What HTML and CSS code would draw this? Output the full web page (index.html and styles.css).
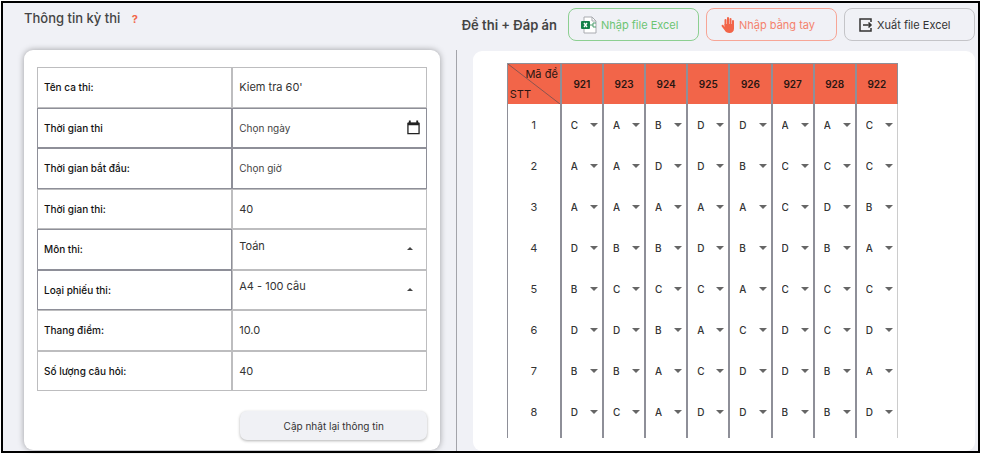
FILE: index.html
```html
<!DOCTYPE html>
<html lang="vi">
<head>
    <meta charset="utf-8">
    <title>Thông tin kỳ thi</title>
    <link rel="stylesheet" href="styles.css">
</head>
<body>
    <div class="frame">
        <header class="header">
            <h2 class="title">Thông tin kỳ thi <a class="help" href="#help">?</a></h2>
            <div class="actions">
                <h2>Đề thi + Đáp án</h2>
                <button class="action green" type="button">
                    <svg width="16" height="18" viewBox="0 0 16 18">
                        <path d="M3 1h8l4 4v12H3z" fill="#fff" stroke="#a9abb0"/>
                        <path d="M11 1v4h4" fill="none" stroke="#a9abb0"/>
                        <path d="M9 9h3M12 7v4h3M12 7h3" fill="none" stroke="#4b9c6d"/>
                        <rect x="0" y="5" width="9" height="8" rx="1" fill="#15804a"/>
                        <path d="M3 7l3 4M6 7l-3 4" stroke="#fff" stroke-width="1.3"/>
                    </svg>
                    <span>Nhập file Excel</span>
                </button>
                <button class="action red" type="button">
                    <svg width="14" height="18" viewBox="0 0 14 18">
                        <path d="M4.500 10V4M7 9V2M9.500 9V3M12 10V5" fill="none" stroke="#f26549" stroke-width="2" stroke-linecap="round"/>
                        <path d="M3.500 8H13v4.500c0 2.800-1.700 4.500-4.500 4.500-2.400 0-3.800-1-4.800-2.800L.8 10.500c-.8-1.300.7-2.200 1.600-1.300L4 11z" fill="#f26549"/>
                    </svg>
                    <span>Nhập bằng tay</span>
                </button>
                <button class="action grey" type="button">
                    <svg width="14" height="14" viewBox="0 0 14 14" fill="none" stroke="#333" stroke-width="1.500">
                        <path d="M12 4V1H1v12h11v-3M4 7h8M9.500 4.500L12 7 9.500 9.500"/>
                    </svg>
                    <span>Xuất file Excel</span>
                </button>
            </div>
        </header>

        <main class="panels">
            <form class="card info">
                <table class="info-table">
                    <tr>
                        <th><label for="name">Tên ca thi:</label></th>
                        <td><input id="name" type="text" value="Kiem tra 60'"></td>
                    </tr>
                    <tr class="dark">
                        <th><label for="date">Thời gian thi</label></th>
                        <td>
                            <div class="field">
                                <input id="date" class="small" type="text" placeholder="Chọn ngày">
                                <svg width="14" height="15" viewBox="0 0 14 15">
                                    <path d="M1 3h12v11H1z" fill="none" stroke="#222" stroke-width="1.400"/>
                                    <path d="M1 2h12v3H1zM2 0h2v3H2zM10 0h2v3h-2z" fill="#222"/>
                                </svg>
                            </div>
                        </td>
                    </tr>
                    <tr class="dark">
                        <th><label for="start">Thời gian bắt đầu:</label></th>
                        <td><input id="start" class="small" type="text" placeholder="Chọn giờ"></td>
                    </tr>
                    <tr>
                        <th><label for="duration">Thời gian thi:</label></th>
                        <td><input id="duration" type="text" value="40"></td>
                    </tr>
                    <tr class="dark-label">
                        <th><label for="subject">Môn thi:</label></th>
                        <td>
                            <div class="field raised">
                                <select id="subject"><option>Toán</option></select>
                                <i class="up"></i>
                            </div>
                        </td>
                    </tr>
                    <tr class="dark-label">
                        <th><label for="sheet">Loại phiếu thi:</label></th>
                        <td>
                            <div class="field raised">
                                <select id="sheet"><option>A4 - 100 câu</option></select>
                                <i class="up"></i>
                            </div>
                        </td>
                    </tr>
                    <tr>
                        <th><label for="scale">Thang điểm:</label></th>
                        <td><input id="scale" type="text" value="10.0"></td>
                    </tr>
                    <tr>
                        <th><label for="count">Số lượng câu hỏi:</label></th>
                        <td><input id="count" type="text" value="40"></td>
                    </tr>
                </table>
                <button class="update" type="button">Cập nhật lại thông tin</button>
            </form>

            <div class="divider"></div>

            <section class="card answers">
                <table class="answer-table">
                    <thead>
                        <tr id="codes">
                            <th class="corner">
                                <svg viewBox="0 0 52 40" preserveAspectRatio="none"><path d="M0 0L52 40" stroke="#8a5450"/></svg>
                                <div class="code">Mã đề</div>
                                <div class="stt">STT</div>
                            </th>
                        </tr>
                    </thead>
                    <tbody id="answers"></tbody>
                </table>
            </section>
        </main>
    </div>
    <script src="script.js"></script>
</body>
</html>
```
FILE: styles.css
```css
* {
    box-sizing: border-box;
}

body {
    margin: 0;
    padding: 1px;
    background-color: #ffffff;
    font-family: Inter, "Liberation Sans", sans-serif;
    font-size: 11px;
    color: #333333;
}

.frame {
    border: 2px solid #000000;
    background-color: #f0f1f6;
}

.header {
    display: flex;
    justify-content: space-between;
    height: 47px;
    padding: 5px 3px 0 21px;
}

h2 {
    margin: 0;
    font-size: 13px;
    line-height: 20px;
    font-weight: 500;
    color: #444444;
}

.help {
    margin-left: 8px;
    font-size: 11px;
    font-weight: 700;
    color: #f26549;
    text-decoration: none;
}

.actions {
    display: flex;
    align-items: center;
    gap: 7px;
    height: 33px;
}

.actions h2 {
    margin-right: 4px;
    font-weight: 600;
}

button, input, select {
    font-family: inherit;
    color: inherit;
}

.action {
    display: flex;
    align-items: center;
    gap: 4px;
    width: 131px;
    height: 33px;
    padding: 0 0 0 12px;
    border: 1px solid #c4c4c8;
    border-radius: 8px;
    background: none;
    font-size: 11px;
    white-space: nowrap;
    cursor: pointer;
}

.green {
    border-color: #8ccf91;
    color: #6cc473;
}

.red {
    padding-left: 14px;
    border-color: #f7a596;
    color: #f4826c;
}

.grey {
    padding-left: 14px;
}

.panels {
    display: grid;
    grid-template-columns: minmax(0, 416fr) 1px minmax(0, 501fr);
    column-gap: 16px;
    padding: 0 3px 0 21px;
}

.card {
    background-color: #ffffff;
    border-radius: 9px;
}

.info {
    margin-bottom: 1px;
    padding: 17px 13px 10px 13px;
    box-shadow: 0 0 6px rgba(0, 0, 0, 0.35);
}

.info-table {
    width: 100%;
    height: 324px;
    table-layout: fixed;
    border-spacing: 0;
}

.info-table th, .info-table td {
    height: 40px;
    padding: 0 6px;
    border: 1px solid #bdbdbf;
    text-align: left;
}

.info-table th {
    font-size: 10px;
    font-weight: 500;
    color: #111111;
}

.info-table .dark th, .info-table .dark td, .info-table .dark-label th {
    border-color: #8e8f98;
}

.info-table input, .info-table select {
    display: block;
    width: 100%;
    height: 20px;
    padding: 0;
    border: none;
    outline: none;
    background: none;
    appearance: none;
    font-size: 11px;
}

.info-table .small {
    font-size: 10px;
}

.info-table input::placeholder {
    color: #444444;
}

.field {
    display: flex;
    align-items: center;
}

.raised {
    padding-bottom: 7px;
}

.up {
    margin: 6px 7px 0 0;
    border: 3px solid transparent;
    border-top: none;
    border-bottom-color: #444444;
}

.update {
    display: block;
    width: 48%;
    height: 29px;
    margin: 20px 0 0 auto;
    border: none;
    border-radius: 7px;
    background-color: #f0f1f5;
    box-shadow: 0 1px 3px rgba(0, 0, 0, 0.3);
    font-size: 10px;
    cursor: pointer;
}

.divider {
    background-color: #a3a4aa;
}

.answers {
    margin-top: 1px;
    padding: 12px 0 13px;
}

.answer-table {
    width: 78%;
    margin: 0 77px 0 auto;
    table-layout: fixed;
    border-spacing: 0;
}

.answer-table th, .answer-table td {
    height: 41px;
    padding: 0;
    border: 1px solid #8e8f98;
    border-width: 0 1px;
    text-align: center;
}

.answer-table td:last-child {
    border-right-color: #cccccc;
}

.answer-table thead th {
    height: 40px;
    border-top-width: 1px;
    background-color: #f26549;
    font-size: 10px;
    font-weight: 600;
    color: #2a1512;
}

.answer-table thead .corner {
    position: relative;
    width: 54px;
    font-size: 11px;
    font-weight: 400;
    line-height: 20px;
}

.corner svg {
    position: absolute;
    top: 0;
    left: 0;
    width: 100%;
    height: 100%;
}

.code {
    padding-right: 2px;
    text-align: right;
}

.stt {
    padding-left: 2px;
    text-align: left;
}

.answer-table tbody th {
    font-weight: 400;
}

.answer-table tr:last-child td, .answer-table tbody tr:last-child th {
    height: 47px;
    padding-bottom: 6px;
}

.pick {
    display: flex;
    align-items: center;
}

.pick select {
    flex: 1;
    min-width: 0;
    padding: 0 0 0 9px;
    border: none;
    background: none;
    appearance: none;
    font-size: 10px;
    font-weight: 500;
}

.down {
    margin-right: 4px;
    border: 4px solid transparent;
    border-bottom: none;
    border-top-color: #666666;
}
```
FILE: script.js
```js
var codes = ["921", "923", "924", "925", "926", "927", "928", "922"];
var answers = [
    "CABDDAAC",
    "AADDBCCC",
    "AAAAACDB",
    "DBBDBDBA",
    "BCCCACCC",
    "DDBACDCD",
    "BBACDDBA",
    "DCADDBBD"
];

var head = document.getElementById("codes");
codes.forEach(function (code) {
    var th = document.createElement("th");
    th.textContent = code;
    head.appendChild(th);
});

var body = document.getElementById("answers");
answers.forEach(function (row, i) {
    var html = "<th>" + (i + 1) + "</th>";
    for (var j = 0; j < row.length; j++) {
        var options = ["A", "B", "C", "D"].map(function (letter) {
            return "<option" + (letter === row[j] ? " selected" : "") + ">" + letter + "</option>";
        }).join("");
        html += '<td><div class="pick"><select aria-label="Câu ' + (i + 1) + ", đề " + codes[j] + '">' +
            options + '</select><i class="down"></i></div></td>';
    }
    var tr = document.createElement("tr");
    tr.innerHTML = html;
    body.appendChild(tr);
});
```
